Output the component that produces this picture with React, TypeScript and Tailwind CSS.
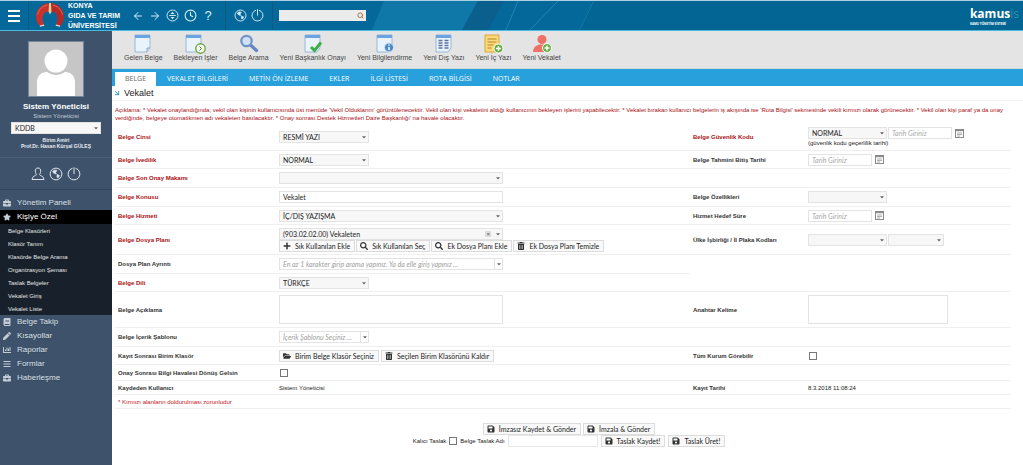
import React, { useState } from 'react';
import { ArrowLeft, ArrowRight, ArrowDownRight, Clock, Search } from 'lucide-react';
import {
  FaBriefcase, FaStar, FaBook, FaPen, FaChartBar, FaBars,
  FaPlus, FaTrashAlt, FaFolderOpen, FaSave, FaSearch, FaCaretDown,
} from 'react-icons/fa';

const SUB_ITEMS = [
  'Belge Klasörleri',
  'Klasör Tanım',
  'Klasörde Belge Arama',
  'Organizasyon Şeması',
  'Taslak Belgeler',
  'Vekalet Giriş',
  'Vekalet Liste',
];

const MENU = [
  { label: 'Yönetim Paneli', icon: FaBriefcase },
  { label: 'Kişiye Özel', icon: FaStar, children: SUB_ITEMS },
  { label: 'Belge Takip', icon: FaBook },
  { label: 'Kısayollar', icon: FaPen },
  { label: 'Raporlar', icon: FaChartBar },
  { label: 'Formlar', icon: FaBars },
  { label: 'Haberleşme', icon: FaBriefcase },
];

const TOOLS = [
  { label: 'Gelen Belge', kind: 'doc' },
  { label: 'Bekleyen İşler', kind: 'pending' },
  { label: 'Belge Arama', kind: 'search' },
  { label: 'Yeni Başkanlık Onayı', kind: 'approve' },
  { label: 'Yeni Bilgilendirme', kind: 'info' },
  { label: 'Yeni Dış Yazı', kind: 'outgoing' },
  { label: 'Yeni İç Yazı', kind: 'internal' },
  { label: 'Yeni Vekalet', kind: 'person' },
];

const TABS = ['BELGE', 'VEKALET BİLGİLERİ', 'METİN ÖN İZLEME', 'EKLER', 'İLGİ LİSTESİ', 'ROTA BİLGİSİ', 'NOTLAR'];

const GlobeIcon = ({ className }: { className: string }) => (
  <svg viewBox="0 0 14 14" className={className} fill="none" stroke="currentColor">
    <circle cx="7" cy="7" r="5.9" />
    <path d="M3.500 4.500 5.500 3 8 3.500 6.500 5.500 7.500 7 5 6.500ZM8 7.500l2.500 1-1 2L8 10.500Z" fill="currentColor" strokeWidth="0.6" />
  </svg>
);

const PowerIcon = ({ className }: { className: string }) => (
  <svg viewBox="0 0 14 14" className={className} fill="none" stroke="currentColor">
    <path d="M5.5 1.3A5.9 5.9 0 1 0 8.5 1.3M7 .3v6.8" />
  </svg>
);

const UserIcon = ({ className }: { className: string }) => (
  <svg viewBox="0 0 14 14" className={className} fill="none" stroke="currentColor">
    <path d="M7 1C4.7 1 4.2 2.600 4.300 4.300 4.400 6 5.200 7 5.500 7.600 5.300 8.700 1 9 1 12.500h12C13 9 8.700 8.700 8.500 7.600 8.800 7 9.600 6 9.700 4.300 9.800 2.600 9.300 1 7 1Z" />
  </svg>
);

const UpDownIcon = ({ className }: { className: string }) => (
  <svg viewBox="0 0 14 14" className={className} fill="none" stroke="currentColor">
    <circle cx="7" cy="7" r="5.9" />
    <path d="M3.500 7h7" />
    <path d="M5 5.300 7 3l2 2.300ZM5 8.700 7 11l2-2.300Z" fill="currentColor" stroke="none" />
  </svg>
);

const CalendarIcon = () => (
  <svg viewBox="0 0 9 9" className="size-[9px]" fill="none">
    <rect x="0.500" y="0.500" width="8" height="8" fill="#fff" stroke="#8a8a8a" />
    <path d="M0.500 1.500h8" stroke="#8a8a8a" strokeWidth="1.400" />
    <path d="M2 4h5M2 5.500h5M2 7h3" stroke="#a5a5a5" strokeWidth="0.900" />
  </svg>
);

const UniversityLogo = () => (
  <svg viewBox="0 0 30 28" className="h-[27px] w-[30px]">
    <path d="M13.500 1C6 2 .5 8 .5 15c0 4 1.500 7.500 4 10l4.500-1C7 20 6.500 15 9 12c1.500-2 3.500-2.500 5.500-1.500Z" fill="#c8322b" />
    <path d="M16.500 1C24 2 29.500 8 29.500 15c0 4-1.500 7.500-4 10l-4.500-1c2-4 2.500-9 0-12-1.500-2-3.500-2.500-5.500-1.500Z" fill="#b62a25" />
    <path d="M2 13C3.500 7 8 4 12 3.500M28 13C26.500 7 22 4 18 3.500" stroke="#e4695a" fill="none" />
    <path d="M4.500 25 9 24M25.500 25 21 24" stroke="#e8d8d0" strokeWidth="1.500" />
    <path d="M14 1h2l.5 9-1.500 3-1.500-3Z" fill="#e9cf9c" />
  </svg>
);

const Page = ({ children }: { children?: React.ReactNode }) => (
  <>
    <path d="M1 1h15v13l-3 4H1Z" fill="#e9f3fc" stroke="#9bb6d6" />
    <path d="M1 1h15v3H1Z" fill="#6ba4e0" />
    {children}
  </>
);

const ToolIcon = ({ kind }: { kind: string }) => (
  <svg viewBox="0 0 22 20" className="h-5 w-[22px]" fill="none">
    {kind === 'doc' && <g transform="translate(2)"><Page><path d="M16 14h-3v4" stroke="#8aa9cf" fill="#c5dbf0" /></Page></g>}
    {kind === 'pending' && (
      <Page>
        <circle cx="15.500" cy="14.500" r="4.700" fill="#f4faee" stroke="#6da544" strokeWidth="1.400" />
        <path d="m14.500 12.500 2 2-2 2" stroke="#47702b" />
      </Page>
    )}
    {kind === 'search' && (
      <>
        <path d="m12.500 11 6 5.500" stroke="#6485bd" strokeWidth="3.200" strokeLinecap="round" />
        <circle cx="8.500" cy="7" r="5.200" fill="#cfe2f5" stroke="#7291c9" strokeWidth="2.200" />
      </>
    )}
    {kind === 'approve' && (
      <g transform="translate(2)"><Page><path d="m7 13 3.500 3.500L17 8.500" stroke="#3fae49" strokeWidth="3" /></Page></g>
    )}
    {kind === 'info' && (
      <g transform="translate(2)">
        <Page>
          <circle cx="13" cy="13.500" r="4.500" fill="#4a8ac6" stroke="#d9e8f5" />
          <path d="M13 10.500v1.300M13 13v3.300" stroke="#fff" strokeWidth="1.500" />
        </Page>
      </g>
    )}
    {kind === 'outgoing' && (
      <g transform="translate(2)">
        <Page>
          <path d="M3.500 6.500h4M9.500 6.500h4M3.500 9h4M9.500 9h4M3.500 11.500h4M9.500 11.500h4M3.500 14h4M9.500 14h4" stroke="#60749f" strokeWidth="1.500" />
        </Page>
      </g>
    )}
    {kind === 'internal' && (
      <>
        <path d="M3 1h14v17H3Z" fill="#fbd878" stroke="#d9a63a" />
        <path d="M5.500 5h9M5.500 8h9M5.500 11h6M5.500 14h4" stroke="#b6862c" />
        <circle cx="16.500" cy="14.500" r="4.500" fill="#62b045" stroke="#fff" />
        <path d="M16.500 12v5M14 14.500h5" stroke="#fff" strokeWidth="1.500" />
      </>
    )}
    {kind === 'person' && (
      <>
        <circle cx="11" cy="5.500" r="4.500" fill="#ee7167" />
        <path d="M2 18c0-5 4-7 6.500-7.500h5C16 11 19 13 19 18Z" fill="#ee7167" />
        <circle cx="16" cy="14" r="4.500" fill="#62b045" stroke="#fff" />
        <path d="M16 11.500v5M13.500 14h5" stroke="#fff" strokeWidth="1.500" />
      </>
    )}
  </svg>
);

interface SelectProps {
  id?: string;
  label?: string;
  value?: string;
  width: string;
  placeholder?: boolean;
  clearable?: boolean;
}

const Select = ({ id, label, value = '', width, placeholder, clearable }: SelectProps) => (
  <div className={`relative h-3 ${width}`}>
    <select
      id={id}
      aria-label={label}
      defaultValue={value}
      className={`block h-3 w-full appearance-none border border-[#e3e3e3] pl-[3px] font-[Lato,'Open_Sans',sans-serif] text-[7px] leading-[10px] ${
        placeholder ? 'bg-white italic text-[#a0a0a0]' : 'bg-[#f7f7f7] text-[#222]'
      }`}
    >
      <option>{value}</option>
    </select>
    {clearable && (
      <span className="pointer-events-none absolute top-[3px] right-[12px] bg-[#ddd] px-px text-[6px] leading-[6px] text-[#555]">×</span>
    )}
    <span className={`pointer-events-none absolute top-px right-px flex h-2.5 w-2 items-center justify-center ${placeholder ? 'border-l border-[#e3e3e3]' : ''}`}>
      <FaCaretDown className="size-[6px] text-[#666]" />
    </span>
  </div>
);

const DateField = ({ id, label }: { id?: string; label?: string }) => (
  <div className="flex items-center gap-[3px]">
    <input
      id={id}
      aria-label={label}
      placeholder="Tarih Giriniz"
      className="h-3 w-16 border border-[#e3e3e3] bg-white pl-[3px] font-[Lato,'Open_Sans',sans-serif] text-[7px] italic placeholder:text-[#a8a8a8]"
    />
    <button type="button" aria-label="Takvim"><CalendarIcon /></button>
  </div>
);

const Button = ({ icon: Icon, children }: { icon: React.ElementType; children: React.ReactNode }) => (
  <button
    type="button"
    className="flex h-3 items-center gap-1 border border-[#dcdcdc] bg-[#f9f9f9] pr-1 pl-[3px] font-[Lato,'Open_Sans',sans-serif] text-[7px] leading-[10px] whitespace-nowrap text-[#222] hover:bg-[#eee]"
  >
    <Icon className="size-2 text-[#333]" />
    {children}
  </button>
);

const Check = ({ id }: { id: string }) => (
  <input id={id} type="checkbox" className="block size-2 appearance-none border border-[#777] bg-white checked:bg-[#27a0dc]" />
);

interface RowProps {
  height: string;
  label: string;
  id?: string;
  required?: boolean;
  children: React.ReactNode;
  right?: { label: string; id?: string; required?: boolean; content: React.ReactNode };
  half?: boolean;
}

const FieldLabel = ({ id, required, children }: { id?: string; required?: boolean; children: React.ReactNode }) => {
  const color = required ? 'text-[#a80f14]' : 'text-[#333]';
  return id
    ? <label htmlFor={id} className={`font-bold ${color}`}>{children}</label>
    : <span className={`font-bold ${color}`}>{children}</span>;
};

const Row = ({ height, label, id, required, children, right, half }: RowProps) => (
  <div className={`grid grid-cols-[161px_1fr_115px_206px] ${height}`}>
    <div className="flex items-center border-b border-[#efefef] pl-[3px]">
      <FieldLabel id={id} required={required}>{label}</FieldLabel>
    </div>
    <div className="flex items-center border-b border-[#efefef] pl-[3px]">{children}</div>
    <div className={`flex items-center pl-[3px] ${half ? '' : 'border-b border-[#efefef]'}`}>
      {right && <FieldLabel id={right.id} required={right.required}>{right.label}</FieldLabel>}
    </div>
    <div className={`flex items-center pl-[3px] ${half ? '' : 'border-b border-[#efefef]'}`}>{right?.content}</div>
  </div>
);

const Header = () => (
  <header className="relative flex h-[31px] items-center border-t border-b border-t-[#a9cfe0] border-b-[#4bb9dc] bg-[#04699a] text-white">
    <svg className="absolute top-0 right-0 h-full w-[65%]" viewBox="0 0 665 29" preserveAspectRatio="none" fill="none">
      <path d="M26 0 14 29h90L120 0Z" fill="#1078a8" />
      <path d="M120 0 104 29h26L146 0Z" fill="#0a5f8d" />
      <path d="M160 0 148 29M200 0 172 29M236 0 222 29" stroke="#2484b0" />
      <path d="M236 0 222 29h443V0Z" fill="#036593" />
    </svg>
    <div className="relative flex h-full items-center">
      <button type="button" aria-label="Menü" className="flex h-full w-[29px] items-center justify-center border-r border-[#0b5a82]">
        <svg viewBox="0 0 12 12" className="size-3" stroke="#fff" strokeWidth="2"><path d="M0 1h12M0 6h12M0 11h12" /></svg>
      </button>
      <a href="#" className="flex items-center gap-[3px] pl-1.5 text-[7px] leading-[10px] font-bold">
        <UniversityLogo />
        <span>KONYA<br />GIDA VE TARIM<br />ÜNİVERSİTESİ</span>
      </a>
    </div>
    <nav className="relative flex h-full items-center text-[#d8eef8]">
      <div className="flex h-full items-center gap-[5px] border-r border-[#0b5a82] pr-[11px] pl-3">
        <button type="button" aria-label="Geri"><ArrowLeft size={12} strokeWidth={2} /></button>
        <button type="button" aria-label="İleri"><ArrowRight size={12} strokeWidth={2} /></button>
        <button type="button" aria-label="Genişlet"><UpDownIcon className="size-[13px]" /></button>
        <button type="button" aria-label="Geçmiş"><Clock size={13} strokeWidth={2} /></button>
        <button type="button" className="w-3 text-[13px] leading-none">?</button>
      </div>
      <div className="flex h-full items-center gap-1 border-r border-[#0b5a82] px-2">
        <button type="button" aria-label="Dil"><GlobeIcon className="size-[13px]" /></button>
        <button type="button" aria-label="Çıkış"><PowerIcon className="size-[13px]" /></button>
      </div>
      <div className="relative ml-1.5">
        <input aria-label="Ara" className="block h-[11px] w-[87px] bg-[#ececec] pr-3 pl-1 text-[7px] text-[#333]" />
        <Search className="absolute top-[2px] right-[2px] size-[7px] text-[#9a6b3a]" strokeWidth={3} />
      </div>
    </nav>
    <div className="relative mr-1 ml-auto flex flex-col font-['Open_Sans',sans-serif] font-bold">
      <span className="text-[12px] leading-[16px]">kamus<span className="font-normal text-[#2496b4]">is</span></span>
      <span className="text-[3px] leading-[4px]">KAMU YÖNETİM SİSTEMİ</span>
    </div>
  </header>
);

const Sidebar = () => (
  <aside className="w-28 shrink-0 bg-[#3e536b] text-[#e8edf2]">
    <div className="flex flex-col items-center border-b border-[#4b6078] px-2.5 pt-2.5 pb-2">
      <svg viewBox="0 0 54 54" className="size-14 border border-[#75869a]">
        <path d="M0 0h54v54H0Z" fill="#c6c6c6" />
        <circle cx="27" cy="19" r="11.500" fill="#fff" />
        <path d="M8 54V40c0-6 4-10 10-10 3 2 6 3 9 3s6-1 9-3c6 0 10 4 10 10v14Z" fill="#fff" />
      </svg>
      <strong className="mt-1 text-[8px] leading-[12px] text-white">Sistem Yöneticisi</strong>
      <span className="mb-[3px] text-[6px] leading-[6px] text-[#c4ced8]">Sistem Yöneticisi</span>
      <Select label="Birim" value="KDDB" width="w-[90px]" />
      <span className="mt-[3px] text-center text-[5px] leading-[6px] font-bold">
        Birim Amiri<br />Prof.Dr. Hasan Kürşal GÜLEŞ
      </span>
    </div>
    <div className="flex h-8 items-center justify-center gap-1 border-b border-[#34475c] text-[#dfe5ea]">
      <button type="button" aria-label="Profil"><UserIcon className="size-[14px]" /></button>
      <button type="button" aria-label="Dil"><GlobeIcon className="size-[14px]" /></button>
      <button type="button" aria-label="Çıkış"><PowerIcon className="size-[14px]" /></button>
    </div>
    <ul className="pt-1.5">
      {MENU.map(({ label, icon: Icon, children }) => (
        <li key={label}>
          <a
            href="#"
            className={`flex h-3.5 items-center gap-1.5 pl-[3px] text-[8px] text-shadow-xs ${children ? 'bg-black text-white' : 'text-[#dde3e9] hover:text-white'}`}
          >
            <Icon className="size-2 text-[#c3ccd4]" />
            {label}
          </a>
          {children && (
            <ul className="bg-[#18212b]">
              {children.map((item) => (
                <li key={item}>
                  <a href="#" className="flex h-[13px] items-center pl-2 text-[6px] text-[#e3e3e3] hover:text-white">{item}</a>
                </li>
              ))}
            </ul>
          )}
        </li>
      ))}
    </ul>
  </aside>
);

export default function App() {
  const [tab, setTab] = useState('BELGE');

  return (
    <div className="flex min-h-screen flex-col bg-white font-['Liberation_Sans',Arial,sans-serif] text-[6px] leading-[8px] text-[#222]">
      <Header />
      <div className="flex flex-1">
        <Sidebar />
        <main className="min-w-0 flex-1">
          <div className="flex h-[38px] gap-[11px] border-b border-[#cfdcd8] bg-[#e4e4e4] pt-[3px] pl-3">
            {TOOLS.map((tool) => (
              <button key={tool.label} type="button" className="flex flex-col items-center text-[7px] leading-[8px] whitespace-nowrap text-[#444]">
                <ToolIcon kind={tool.kind} />
                {tool.label}
              </button>
            ))}
          </div>

          <div role="tablist" className="flex h-[17px] items-end gap-px bg-[#27a0dc] pl-[3px]">
            {TABS.map((t) => (
              <button
                key={t}
                type="button"
                role="tab"
                aria-selected={tab === t}
                onClick={() => setTab(t)}
                className={`h-3.5 px-2.5 font-['Open_Sans',sans-serif] text-[7px] leading-[14px] ${tab === t ? 'bg-white text-[#666]' : 'text-white'}`}
              >
                {t}
              </button>
            ))}
          </div>

          <h1 className="flex h-[15px] items-center gap-[3px] border-b border-[#f3f3f3] pl-px text-[9px] text-[#222]">
            <ArrowDownRight size={8} strokeWidth={3} className="text-[#3b9fc9]" />
            Vekalet
          </h1>

          <form className="pr-3 pl-[3px]">
            <p className="-mr-2 min-h-[23px] pt-[5px] text-[#a80f14]">
              Açıklama: * Vekalet onaylandığında; vekil olan kişinin kullanıcısında üst menüde 'Vekil Olduklarım' görüntülenecektir. Vekil olan kişi vekaletini aldığı kullanıcının bekleyen işlerini yapabilecektir. * Vekalet bırakan kullanıcı belgelerin iş akışında ise 'Rota Bilgisi' sekmesinde vekili kırmızı olarak görünecektir. * Vekil olan kişi paraf ya da onay verdiğinde, belgeye otomatikmen adı vekaleten basılacaktır. * Onay sonrası Destek Hizmetleri Daire Başkanlığı' na havale olacaktır.
            </p>

            <Row
              height="min-h-[27px]"
              label="Belge Cinsi"
              id="cins"
              required
              right={{
                label: 'Belge Güvenlik Kodu',
                id: 'guvenlik',
                required: true,
                content: (
                  <div>
                    <div className="flex gap-px">
                      <Select id="guvenlik" value="NORMAL" width="w-[79px]" />
                      <DateField label="Güvenlik kodu geçerlilik tarihi" />
                    </div>
                    <div>(güvenlik kodu geçerlilik tarihi)</div>
                  </div>
                ),
              }}
            >
              <Select id="cins" value="RESMİ YAZI" width="w-[90px]" />
            </Row>
            <Row
              height="min-h-[18px]"
              label="Belge İvedilik"
              id="ivedilik"
              required
              right={{ label: 'Belge Tahmini Bitiş Tarihi', id: 'bitis', content: <DateField id="bitis" /> }}
            >
              <Select id="ivedilik" value="NORMAL" width="w-[90px]" />
            </Row>
            <Row height="min-h-[19px]" label="Belge Son Onay Makamı" id="makam" required>
              <Select id="makam" width="w-56" />
            </Row>
            <Row
              height="min-h-[19px]"
              label="Belge Konusu"
              id="konu"
              required
              right={{ label: 'Belge Özellikleri', id: 'ozellik', content: <Select id="ozellik" width="w-[79px]" /> }}
            >
              <input id="konu" defaultValue="Vekalet" className="h-3 w-56 border border-[#e3e3e3] pl-[3px] font-[Lato,'Open_Sans',sans-serif] text-[7px]" />
            </Row>
            <Row
              height="min-h-[18px]"
              label="Belge Hizmeti"
              id="hizmet"
              required
              right={{ label: 'Hizmet Hedef Süre', id: 'hedef', content: <DateField id="hedef" /> }}
            >
              <Select id="hizmet" value="İÇ/DIŞ YAZIŞMA" width="w-56" />
            </Row>
            <Row
              height="min-h-[30px]"
              label="Belge Dosya Planı"
              id="plan"
              required
              right={{
                label: 'Ülke İşbirliği / İl Plaka Kodları',
                id: 'ulke',
                content: (
                  <div className="flex gap-px">
                    <Select id="ulke" width="w-[79px]" />
                    <Select label="İl plaka kodu" width="w-14" />
                  </div>
                ),
              }}
            >
              <div>
                <Select id="plan" value="(903.02.02.00) Vekaleten" width="w-56" clearable />
                <div className="flex gap-px">
                  <Button icon={FaPlus}>Sık Kullanılan Ekle</Button>
                  <Button icon={FaSearch}>Sık Kullanılan Seç</Button>
                  <Button icon={FaSearch}>Ek Dosya Planı Ekle</Button>
                  <Button icon={FaTrashAlt}>Ek Dosya Planı Temizle</Button>
                </div>
              </div>
            </Row>
            <Row height="min-h-[19px]" label="Dosya Plan Ayrıntı" id="ayrinti" half>
              <Select id="ayrinti" value="En az 1 karakter girip arama yapınız. Ya da elle giriş yapınız ..." width="w-56" placeholder />
            </Row>
            <Row height="min-h-[18px]" label="Belge Dili" id="dil" required>
              <Select id="dil" value="TÜRKÇE" width="w-[90px]" />
            </Row>
            <Row
              height="min-h-9"
              label="Belge Açıklama"
              id="aciklama"
              right={{
                label: 'Anahtar Kelime',
                id: 'anahtar',
                content: <textarea id="anahtar" className="block h-[29px] w-35 resize-none border border-[#e3e3e3]" />,
              }}
            >
              <textarea id="aciklama" className="block h-[29px] w-56 resize-none border border-[#e3e3e3]" />
            </Row>
            <Row height="min-h-[19px]" label="Belge İçerik Şablonu" id="sablon">
              <Select id="sablon" value="İçerik Şablonu Seçiniz ..." width="w-[90px]" placeholder />
            </Row>
            <Row
              height="min-h-[18px]"
              label="Kayıt Sonrası Birim Klasör"
              right={{ label: 'Tüm Kurum Görebilir', id: 'kurum', content: <div className="pl-px"><Check id="kurum" /></div> }}
            >
              <div className="flex gap-0.5">
                <Button icon={FaFolderOpen}>Birim Belge Klasör Seçiniz</Button>
                <Button icon={FaTrashAlt}>Seçilen Birim Klasörünü Kaldır</Button>
              </div>
            </Row>
            <Row height="min-h-4" label="Onay Sonrası Bilgi Havalesi Dönüş Gelsin" id="donus">
              <div className="pl-px"><Check id="donus" /></div>
            </Row>
            <Row
              height="min-h-3.5"
              label="Kaydeden Kullanıcı"
              right={{ label: 'Kayıt Tarihi', content: '8.3.2018 11:08:24' }}
            >
              Sistem Yöneticisi
            </Row>
            <p className="flex h-3.5 items-center border-b border-[#efefef] pl-[3px] text-[#c0181c]">
              * Kırmızı alanların doldurulması zorunludur
            </p>

            <div className="-mr-3 flex flex-col items-center pt-3.5">
              <div className="flex gap-0.5">
                <Button icon={FaSave}>İmzasız Kaydet &amp; Gönder</Button>
                <Button icon={FaSave}>İmzala &amp; Gönder</Button>
              </div>
              <div className="flex items-center gap-[3px]">
                <label htmlFor="kalici">Kalıcı Taslak</label>
                <Check id="kalici" />
                <label htmlFor="taslak">Belge Taslak Adı</label>
                <input id="taslak" className="h-3 w-[90px] border border-[#e8e8e8] px-1" />
                <Button icon={FaSave}>Taslak Kaydet!</Button>
                <Button icon={FaSave}>Taslak Üret!</Button>
              </div>
            </div>
          </form>
        </main>
      </div>
    </div>
  );
}
